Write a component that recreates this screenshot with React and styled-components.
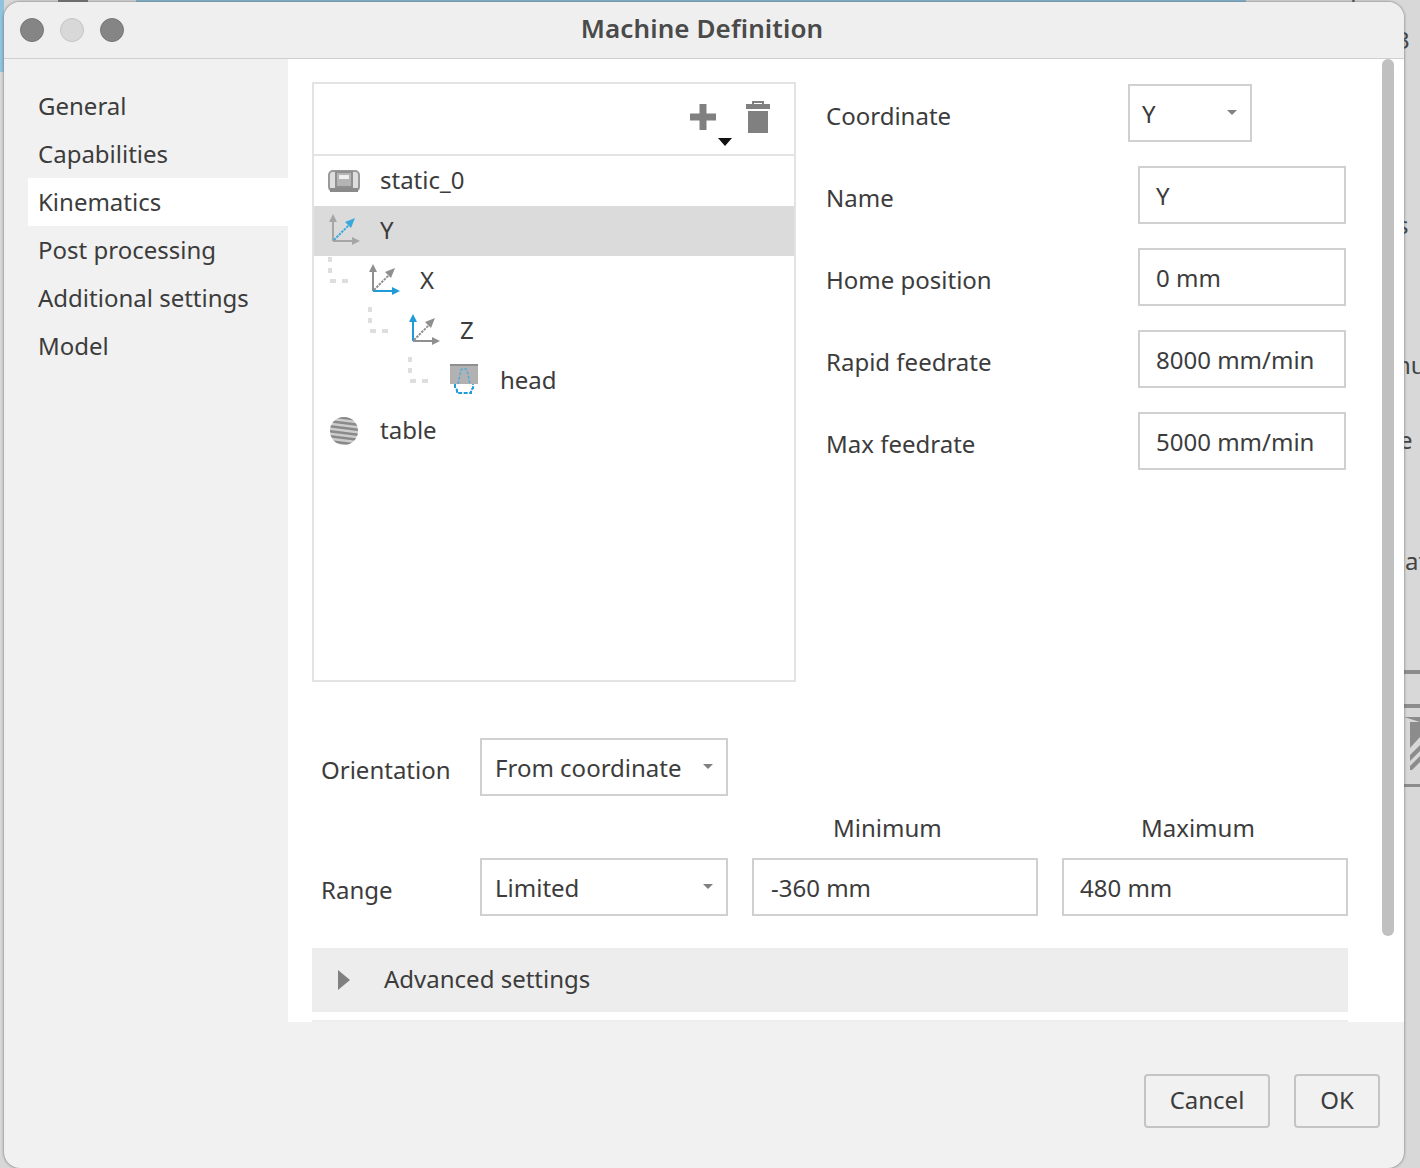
import React from 'react';
import styled, { createGlobalStyle } from 'styled-components';

const Global = createGlobalStyle`
	html, body {
		margin: 0;
		padding: 0;
		height: 1168px;
		overflow: hidden;
		background: #d6d6d6;
	}
	* { box-sizing: border-box; }
`;

const Page = styled.div`
	position: relative;
	width: 1420px;
	height: 1168px;
	padding: 2px 16px 0 4px;
	font-family: "Noto Sans", "Open Sans", sans-serif;
	font-size: 24px;
	color: #3c3c3c;
	background: #d8d8d8;
	overflow: hidden;
`;

const BackdropTop = styled.div`
	position: absolute;
	left: ${props => props.x}px;
	top: 0;
	width: ${props => props.w}px;
	height: ${props => props.h}px;
	background: ${props => props.color};
`;

const BackdropBit = styled.span`
	position: absolute;
	left: ${props => props.x}px;
	top: ${props => props.y}px;
	line-height: 32px;
	color: #444;
`;

const BackdropBar = styled.div`
	position: absolute;
	left: 1404px;
	width: 16px;
	top: ${props => props.y}px;
	height: ${props => props.h}px;
	background: #8c8c8c;
`;

const BackdropGlyph = styled.svg`
	position: absolute;
	left: 1404px;
	top: 717px;
	width: 16px;
	height: 57px;
`;

const Dialog = styled.div`
	position: relative;
	display: flex;
	flex-direction: column;
	height: 1166px;
	background: #f1f1f1;
	border-radius: 16px;
	overflow: hidden;
	box-shadow: 0 0 3px #666;
`;

const TitleBar = styled.div`
	position: relative;
	height: 57px;
	flex: none;
	display: flex;
	align-items: center;
	justify-content: center;
	padding: 0 4px 4px 0;
	background: #efefef;
	border-bottom: 1px solid #cfcfcf;
	font-weight: 600;
	font-size: 26px;
	letter-spacing: 0.1px;
	color: #4a4a4a;
`;

const Lights = styled.div`
	position: absolute;
	left: 16px;
	top: 16px;
	display: flex;
	gap: 16px;
`;

const Light = styled.span`
	width: 24px;
	height: 24px;
	border-radius: 50%;
	background: ${props => (props.off ? '#d8d8d8' : '#858585')};
	border: 1px solid ${props => (props.off ? '#c4c4c4' : '#767676')};
`;

const Body = styled.div`
	display: flex;
	height: 963px;
	flex: none;
`;

const Sidebar = styled.div`
	width: 284px;
	flex: none;
	padding-top: 23px;
	padding-left: 24px;
`;

const SideItem = styled.div`
	height: 48px;
	padding: 0 0 2px 10px;
	display: flex;
	align-items: center;
	background: ${props => (props.selected ? '#fff' : 'transparent')};
`;

const Content = styled.div`
	position: relative;
	flex: 1;
	background: #fff;
	padding: 23px 56px 0 24px;
	overflow: hidden;
`;

const ScrollThumb = styled.div`
	position: absolute;
	right: 10px;
	top: 0;
	width: 12px;
	height: 877px;
	border-radius: 6px;
	background: #c0c0c0;
`;

const TopArea = styled.div`
	display: flex;
	height: 600px;
`;

const TreePanel = styled.div`
	width: 484px;
	height: 600px;
	flex: none;
	border: 2px solid #e3e3e3;
`;

const TreeToolbar = styled.div`
	position: relative;
	height: 72px;
	border-bottom: 2px solid #e3e3e3;
	display: flex;
	justify-content: flex-end;
	align-items: center;
	gap: 27px;
	padding: 0 23px 4px 0;
`;

const DropMark = styled.span`
	position: absolute;
	right: 62px;
	bottom: 8px;
	width: 0;
	height: 0;
	border-left: 7px solid transparent;
	border-right: 7px solid transparent;
	border-top: 8px solid #111;
`;

const TreeRow = styled.div`
	position: relative;
	height: 50px;
	display: flex;
	align-items: center;
	padding-left: ${props => 12 + props.level * 40}px;
	background: ${props => (props.selected ? '#dbdbdb' : 'transparent')};
`;

const TreeName = styled.span`
	margin-bottom: 4px;
`;

const TreeIcon = styled.svg`
	width: 36px;
	height: 36px;
	flex: none;
	margin-right: 18px;
`;

const Connector = styled.svg`
	position: absolute;
	left: ${props => 12 + (props.level - 1) * 40}px;
	top: 0;
	width: 26px;
	height: 30px;
`;

const Form = styled.div`
	flex: 1;
	padding: 2px 2px 0 30px;
	display: flex;
	flex-direction: column;
	gap: 24px;
`;

const FormRow = styled.div`
	display: flex;
	align-items: center;
	height: 58px;
	justify-content: space-between;
	padding-right: ${props => (props.compact ? '94px' : '0')};
`;

const FormLabel = styled.div`
	padding-top: 5px;
`;

const Field = styled.div`
	width: ${props => props.w}px;
	height: 58px;
	flex: none;
	border: 2px solid #d0d0d0;
	display: flex;
	align-items: center;
	padding: 0 ${props => props.pad || 16}px;
	grid-row: ${props => props.row || 'auto'};
`;

const InputField = styled(Field)`
	padding-top: 1px;
`;

const SelectBox = styled(Field)`
	position: relative;
	grid-column: 2;
	&::after {
		content: '';
		position: absolute;
		right: 13px;
		top: 50%;
		margin-top: -3px;
		border-left: 5px solid transparent;
		border-right: 5px solid transparent;
		border-top: 5px solid #808080;
	}
`;

const RangeArea = styled.div`
	margin-top: 56px;
	display: grid;
	grid-template-columns: 144px 248px 286px 286px;
	column-gap: 24px;
	grid-template-rows: 58px 62px 58px;
	width: 1036px;
`;

const RowLabel = styled.div`
	margin-left: 9px;
	align-self: center;
	padding-top: 5px;
	grid-column: 1;
	grid-row: ${props => props.row};
`;

const ColHead = styled.div`
	align-self: end;
	padding-bottom: 14px;
	padding-left: ${props => props.inset}px;
	grid-row: 2;
	grid-column: ${props => props.col};
`;

const Advanced = styled.div`
	margin-top: 32px;
	width: 1036px;
	height: 64px;
	background: #ededed;
	display: flex;
	align-items: center;
	padding-left: 26px;
`;

const AdvancedLabel = styled.span`
	margin-bottom: 4px;
`;

const Caret = styled.span`
	width: 0;
	height: 0;
	border-top: 10px solid transparent;
	border-bottom: 10px solid transparent;
	border-left: 12px solid #808080;
	margin-right: 34px;
`;

const NextSection = styled.div`
	margin-top: 8px;
	width: 1036px;
	height: 2px;
	background: #ededed;
`;

const Footer = styled.div`
	flex: 1;
	display: flex;
	justify-content: flex-end;
	align-items: flex-start;
	gap: 24px;
	padding: 52px 24px 0 0;
`;

const Button = styled.div`
	width: ${props => props.w}px;
	height: 54px;
	border: 2px solid #c4c4c4;
	border-radius: 4px;
	padding-bottom: 3px;
	display: flex;
	align-items: center;
	justify-content: center;
`;

function Axes({ active }) {
	const grey = active === 'y' ? '#a6a6a6' : '#8f8f8f';
	const blue = active === 'y' ? '#3ba8dc' : '#1f9bd8';
	const color = axis => (active === axis ? blue : grey);
	return (
		<TreeIcon viewBox="0 0 36 36">
			<path d="M7 28V7" stroke={color('z')} strokeWidth="2" fill="none" />
			<path d="M3 9l4-8 4 8z" fill={color('z')} />
			<path d="M7 28h21" stroke={color('x')} strokeWidth="2" fill="none" />
			<path d="M26 24l8 4-8 4z" fill={color('x')} />
			<path d="M8 27L24 11" stroke={color('y')} strokeWidth="2" strokeDasharray="2.500 1" fill="none" />
			<path d="M19 9l10-4-4 10z" fill={color('y')} />
		</TreeIcon>
	);
}

function StaticIcon() {
	return (
		<TreeIcon viewBox="0 0 36 36">
			<rect x="3" y="8" width="30" height="20" rx="4" fill="#dedede" stroke="#9a9a9a" strokeWidth="2" />
			<rect x="10" y="9" width="16" height="15" fill="#b4b4b4" stroke="#8f8f8f" strokeWidth="2" />
			<rect x="13" y="12" width="10" height="4" fill="#efefef" />
			<rect x="4" y="25" width="28" height="4" fill="#8a8a8a" />
		</TreeIcon>
	);
}

function HeadIcon() {
	return (
		<TreeIcon viewBox="0 0 36 36">
			<rect x="4" y="1" width="28" height="20" fill="#b2b2b2" />
			<rect x="4" y="1" width="28" height="2" fill="#8f8f8f" />
			<path d="M12 21l3-14q3-3 6 0l3 14" fill="none" stroke="#58aadb" strokeWidth="1.600" strokeDasharray="3 1.500" />
			<path d="M9 21v4l2 2v3h14v-3l2-2v-4" fill="none" stroke="#1f9bd8" strokeWidth="2" strokeDasharray="4 1.500" />
		</TreeIcon>
	);
}

function TableIcon() {
	return (
		<TreeIcon viewBox="0 0 36 36">
			<defs>
				<clipPath id="tableDisc">
					<circle cx="18" cy="18" r="14" />
				</clipPath>
			</defs>
			<circle cx="18" cy="18" r="14" fill="#cdcdcd" />
			<g clipPath="url(#tableDisc)" stroke="#8a8a8a" strokeWidth="2.600">
				<path d="M2 3l32 4M2 8l32 4M2 13l32 4M2 18l32 4M2 23l32 4M2 28l32 4" />
			</g>
		</TreeIcon>
	);
}

function Elbow({ level }) {
	return (
		<Connector level={level} viewBox="0 0 26 30">
			<path d="M4 1v5M4 12v5M4 25h6M16 25h6" fill="none" stroke="#dedede" strokeWidth="4" />
		</Connector>
	);
}

const tree = [
	{ name: 'static_0', level: 0, icon: <StaticIcon /> },
	{ name: 'Y', level: 0, icon: <Axes active="y" />, selected: true },
	{ name: 'X', level: 1, icon: <Axes active="x" /> },
	{ name: 'Z', level: 2, icon: <Axes active="z" /> },
	{ name: 'head', level: 3, icon: <HeadIcon /> },
	{ name: 'table', level: 0, icon: <TableIcon /> },
];

const sections = ['General', 'Capabilities', 'Kinematics', 'Post processing', 'Additional settings', 'Model'];

export default function App() {
	return (
		<Page>
			<Global />
			<BackdropTop x={0} w={4} h={72} color="#8fc3de" />
			<BackdropTop x={58} w={30} h={4} color="#707070" />
			<BackdropTop x={136} w={1110} h={4} color="#7fb4cf" />
			<BackdropBit x={145} y={-26}>Standard</BackdropBit>
			<BackdropBit x={1280} y={-26}>Description</BackdropBit>
			<BackdropBit x={1396} y={24}>3</BackdropBit>
			<BackdropBit x={1397} y={209}>s</BackdropBit>
			<BackdropBit x={1396} y={349}>nu</BackdropBit>
			<BackdropBit x={1399} y={424}>e</BackdropBit>
			<BackdropBit x={1405} y={545}>at</BackdropBit>
			<BackdropBar y={670} h={4} />
			<BackdropBar y={704} h={4} />
			<BackdropBar y={784} h={3} />
			<BackdropGlyph viewBox="0 0 16 57">
				<path d="M0 0h16v5H6v26l10-11v-15z" fill="#8c8c8c" />
				<path d="M6 38L16 28v6L6 44zM6 49L16 39v6L8 53H6z" fill="#8c8c8c" />
			</BackdropGlyph>
			<Dialog>
				<TitleBar>
					<Lights>
						<Light />
						<Light off />
						<Light />
					</Lights>
					Machine Definition
				</TitleBar>
				<Body>
					<Sidebar>
						{sections.map(s => (
							<SideItem key={s} selected={s === 'Kinematics'}>{s}</SideItem>
						))}
					</Sidebar>
					<Content>
						<ScrollThumb />
						<TopArea>
							<TreePanel>
								<TreeToolbar>
									<svg width="30" height="30" viewBox="0 0 30 30">
										<path d="M11.500 2h7v9.500H28v7h-9.500V28h-7v-9.500H2v-7h9.500z" fill="#808080" />
									</svg>
									<svg width="26" height="34" viewBox="0 0 26 34">
										<path d="M8 4V2h10v2" fill="none" stroke="#808080" strokeWidth="2" />
										<path d="M1 4h24v5H1zM3 11h20v22H3z" fill="#808080" />
									</svg>
									<DropMark />
								</TreeToolbar>
								{tree.map(item => (
									<TreeRow key={item.name} level={item.level} selected={item.selected}>
										{item.level > 0 && <Elbow level={item.level} />}
										{item.icon}
										<TreeName>{item.name}</TreeName>
									</TreeRow>
								))}
							</TreePanel>
							<Form>
								<FormRow compact>
									<FormLabel>Coordinate</FormLabel>
									<SelectBox w={124} pad={12}>Y</SelectBox>
								</FormRow>
								<FormRow>
									<FormLabel>Name</FormLabel>
									<InputField w={208}>Y</InputField>
								</FormRow>
								<FormRow>
									<FormLabel>Home position</FormLabel>
									<InputField w={208}>0 mm</InputField>
								</FormRow>
								<FormRow>
									<FormLabel>Rapid feedrate</FormLabel>
									<InputField w={208}>8000 mm/min</InputField>
								</FormRow>
								<FormRow>
									<FormLabel>Max feedrate</FormLabel>
									<InputField w={208}>5000 mm/min</InputField>
								</FormRow>
							</Form>
						</TopArea>
						<RangeArea>
							<RowLabel row={1}>Orientation</RowLabel>
							<SelectBox w={248} pad={13} row={1}>From coordinate</SelectBox>
							<ColHead col={3} inset={81}>Minimum</ColHead>
							<ColHead col={4} inset={79}>Maximum</ColHead>
							<RowLabel row={3}>Range</RowLabel>
							<SelectBox w={248} pad={13} row={3}>Limited</SelectBox>
							<InputField w={286} pad={17} row={3}>-360 mm</InputField>
							<InputField w={286} pad={16} row={3}>480 mm</InputField>
						</RangeArea>
						<Advanced>
							<Caret />
							<AdvancedLabel>Advanced settings</AdvancedLabel>
						</Advanced>
						<NextSection />
					</Content>
				</Body>
				<Footer>
					<Button w={126}>Cancel</Button>
					<Button w={86}>OK</Button>
				</Footer>
			</Dialog>
		</Page>
	);
}
